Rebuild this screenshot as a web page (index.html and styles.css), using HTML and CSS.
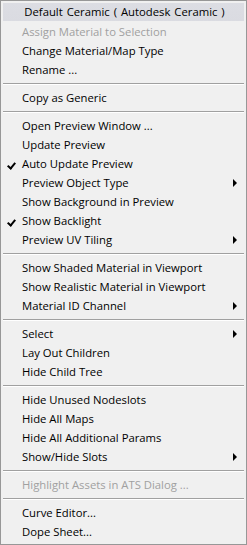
FILE: index.html
```html
<!DOCTYPE html>
<html lang="en">

<head>
    <meta charset="UTF-8">
    <title>Material Menu</title>
    <link rel="stylesheet" href="styles.css">
</head>

<body>

    <div class="menu">
        <div class="title">Default Ceramic ( Autodesk Ceramic )</div>
        <div class="item disabled">Assign Material to Selection</div>
        <div class="item">Change Material/Map Type</div>
        <div class="item">Rename ...</div>
        <div class="sep"></div>
        <div class="item">Copy as Generic</div>
        <div class="sep"></div>
        <div class="item">Open Preview Window ...</div>
        <div class="item">Update Preview</div>
        <div class="item checked">Auto Update Preview</div>
        <div class="item sub">Preview Object Type</div>
        <div class="item">Show Background in Preview</div>
        <div class="item checked">Show Backlight</div>
        <div class="item sub">Preview UV Tiling</div>
        <div class="sep"></div>
        <div class="item">Show Shaded Material in Viewport</div>
        <div class="item">Show Realistic Material in Viewport</div>
        <div class="item sub">Material ID Channel</div>
        <div class="sep"></div>
        <div class="item sub">Select</div>
        <div class="item">Lay Out Children</div>
        <div class="item">Hide Child Tree</div>
        <div class="sep"></div>
        <div class="item">Hide Unused Nodeslots</div>
        <div class="item">Hide All Maps</div>
        <div class="item">Hide All Additional Params</div>
        <div class="item sub">Show/Hide Slots</div>
        <div class="sep"></div>
        <div class="item disabled">Highlight Assets in ATS Dialog ...</div>
        <div class="sep"></div>
        <div class="item">Curve Editor...</div>
        <div class="item">Dope Sheet...</div>
    </div>

</body>

</html>
```

FILE: styles.css
```css
* {
    margin: 0;
    padding: 0;
    box-sizing: border-box;
}

body {
    font-family: "Open Sans", "Noto Sans", sans-serif;
    font-size: 11.3px;
    color: #000;
    background: #f0f0f0;
}

.menu {
    width: 247px;
    height: 545px;
    border: 1px solid #979797;
    padding: 2px;
    background: #f0f0f0;
    display: flex;
    flex-direction: column;
}

.title {
    height: 19px;
    line-height: 17px;
    text-align: center;
    background: linear-gradient(#dcdde3, #dadbe1);
    border-bottom: 1px solid #f0f0f0;
    padding-left: 2px;
    word-spacing: 1px;
}

.item {
    position: relative;
    height: 19px;
    line-height: 19px;
    padding-left: 19px;
    white-space: nowrap;
}

.disabled {
    color: #a0a0a0;
}

.checked::before {
    content: "";
    position: absolute;
    left: 6px;
    top: 7px;
    width: 3px;
    height: 6px;
    border-right: 2px solid #000;
    border-bottom: 2px solid #000;
    transform: rotate(40deg);
}

.sub::after {
    content: "";
    position: absolute;
    right: 7px;
    top: 6px;
    border-left: 4px solid #000;
    border-top: 4px solid transparent;
    border-bottom: 4px solid transparent;
}

.sep {
    height: 9px;
    display: flex;
    flex-direction: column;
    justify-content: center;
}

.sep::after {
    content: "";
    height: 1px;
    background: #a0a0a0;
    border-bottom: 1px solid #fff;
    box-sizing: content-box;
}
```
